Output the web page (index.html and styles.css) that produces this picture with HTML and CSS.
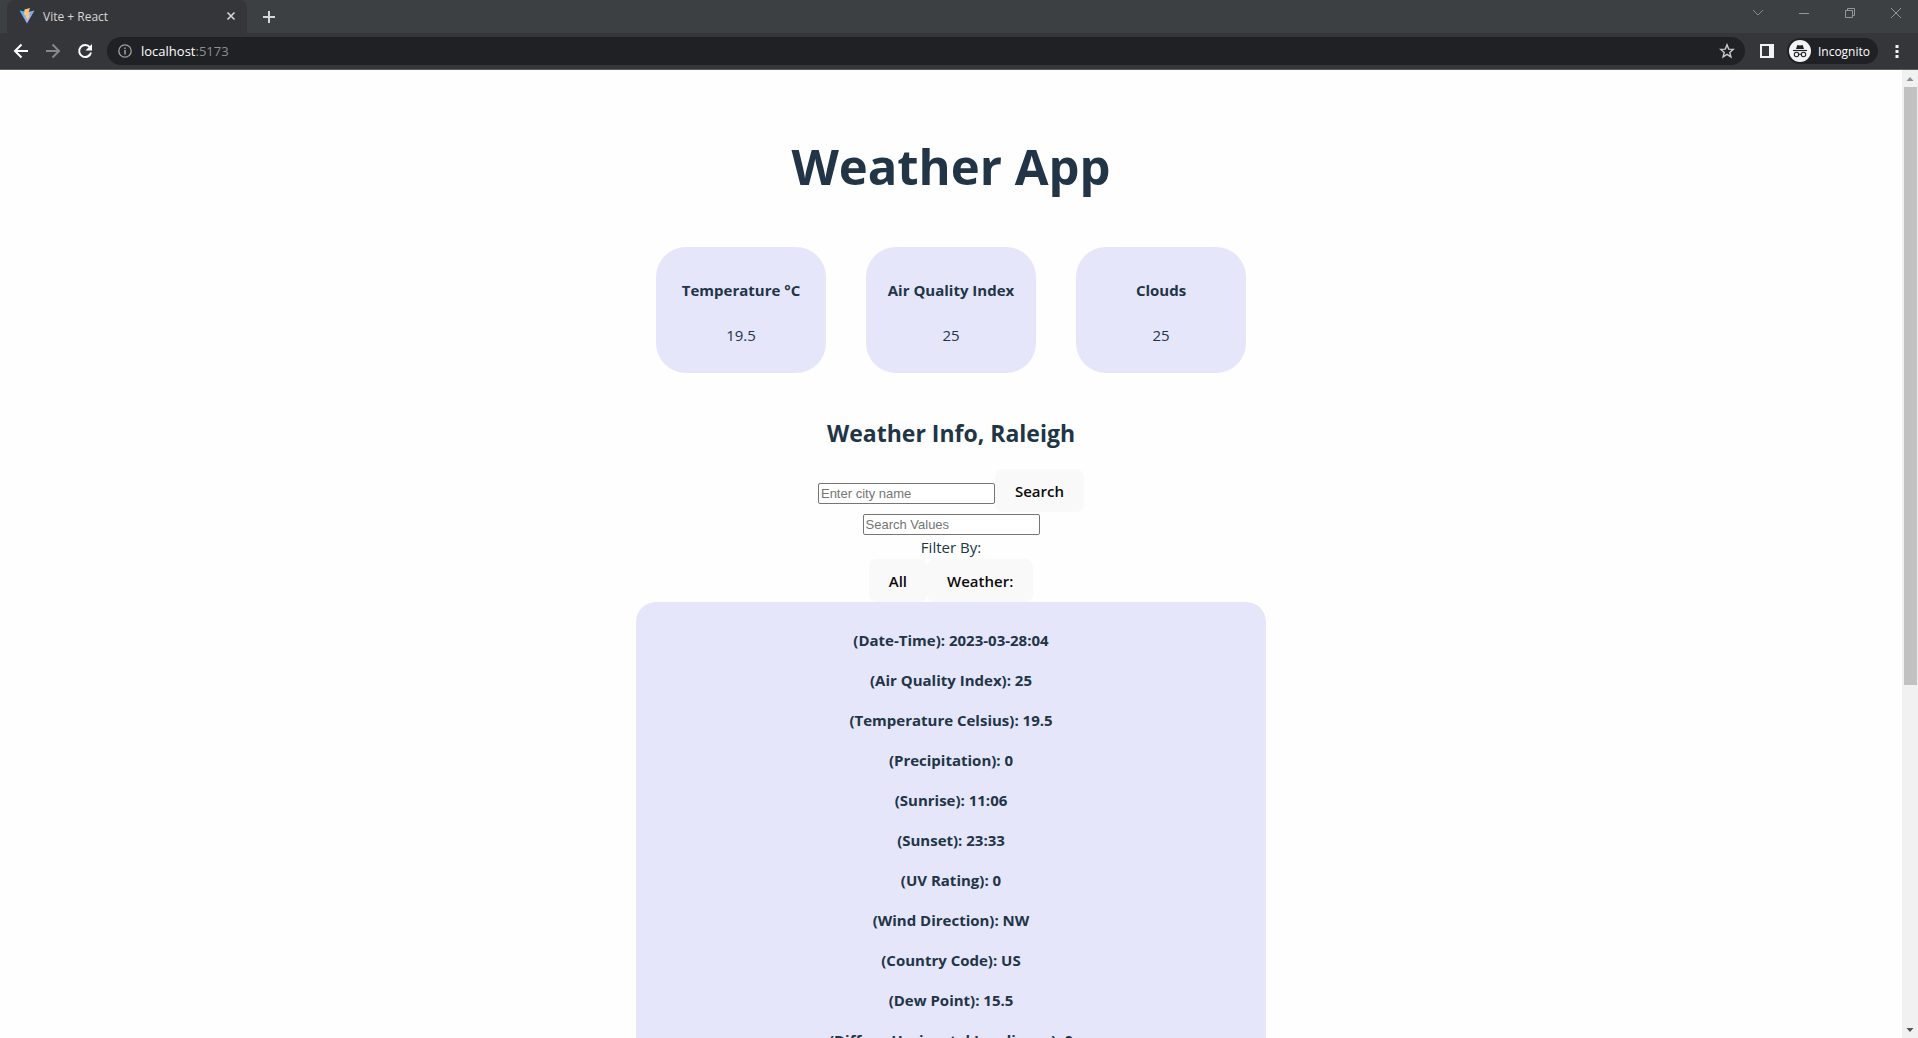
FILE: index.html
```html
<!DOCTYPE html>
<html lang="en">
<head>
<meta charset="utf-8">
<title>Vite + React</title>
<link rel="stylesheet" href="styles.css">
</head>
<body>
<header class="browser">
  <div class="tabstrip">
    <div class="tab">
      <svg class="favicon" viewBox="0 0 32 32" width="16" height="16"><defs><linearGradient id="vb" x1="0" y1="0" x2="1" y2="1"><stop offset="0" stop-color="#41b4ff"/><stop offset="1" stop-color="#b8a4f4"/></linearGradient></defs><path fill="url(#vb)" d="M1 5 16 31 31 5 17 8z"/><path fill="#ffc67a" d="M22 0 11 3 10 15l4-1-1 7 3-1-1 8 8-14-4 1 3-7-3 1z"/></svg>
      <span class="tab-title">Vite + React</span>
      <button class="icon-btn" aria-label="Close tab"><svg width="10" height="10" viewBox="0 0 10 10"><path d="M1.5 1.5l7 7m0-7l-7 7" stroke="#d5d7da" stroke-width="1.6"/></svg></button>
    </div>
    <button class="icon-btn new-tab" aria-label="New tab"><svg width="12" height="12" viewBox="0 0 12 12"><path d="M6 0v12M0 6h12" stroke="#d5d7da" stroke-width="2"/></svg></button>
    <div class="window-controls">
      <button class="icon-btn" aria-label="Search tabs"><svg width="12" height="12" viewBox="0 0 12 12"><path d="M1 3l5 5 5-5" fill="none" stroke="#85888b"/></svg></button>
      <button class="icon-btn" aria-label="Minimize"><svg width="12" height="12" viewBox="0 0 12 12"><path d="M1 6.500h10" stroke="#94979a"/></svg></button>
      <button class="icon-btn" aria-label="Restore"><svg width="12" height="12" viewBox="0 0 12 12"><path d="M1.500 3.500h7v7h-7zM3.500 3V1.500h7v7H9" fill="none" stroke="#94979a"/></svg></button>
      <button class="icon-btn" aria-label="Close"><svg width="12" height="12" viewBox="0 0 12 12"><path d="M1 1l10 10m0-10L1 11" stroke="#94979a"/></svg></button>
    </div>
  </div>
  <div class="toolbar">
    <nav class="nav">
      <button class="icon-btn" aria-label="Back"><svg width="16" height="16" viewBox="0 0 16 16"><path d="M15 8H2m6.500-6.500L2 8l6.500 6.500" fill="none" stroke="#fff" stroke-width="2"/></svg></button>
      <button class="icon-btn" aria-label="Forward"><svg width="16" height="16" viewBox="0 0 16 16"><path d="M1 8h13M7.500 1.500L14 8l-6.500 6.500" fill="none" stroke="#87888a" stroke-width="2"/></svg></button>
      <button class="icon-btn" aria-label="Reload"><svg width="16" height="16" viewBox="0 0 16 16"><path d="M13 4.500A6 6 0 1 0 14 9.500" fill="none" stroke="#fff" stroke-width="2"/><path d="M15 1v6.500H8.500z" fill="#fff"/></svg></button>
    </nav>
    <div class="omnibox">
      <svg width="14" height="14" viewBox="0 0 14 14"><circle cx="7" cy="7" r="6.200" fill="none" stroke="#9fa1a5" stroke-width="1.300"/><path d="M7 6v4.500M7 3.500V5" stroke="#9fa1a5" stroke-width="1.500"/></svg>
      <span class="url"><span class="host">localhost</span>:5173</span>
      <button class="icon-btn" aria-label="Bookmark"><svg width="16" height="16" viewBox="0 0 16 16"><path d="M8 1.800l1.700 4.300 4.600.3-3.500 3 1.100 4.500L8 11.400l-3.900 2.500 1.100-4.500-3.500-3 4.600-.3z" fill="none" stroke="#c8cacd" stroke-width="1.400"/></svg></button>
    </div>
    <button class="icon-btn" aria-label="Side panel"><svg width="14" height="14" viewBox="0 0 14 14"><path d="M0 0h14v14H0zM2 2v10h7V2z" fill="#f1f3f4" fill-rule="evenodd"/></svg></button>
    <button class="profile"><svg width="22" height="22" viewBox="0 0 22 22"><circle cx="11" cy="11" r="11" fill="#f1f3f4"/><path d="M7 9l1.300-4 2.700.6 2.700-.6L15 9z" fill="#202124"/><path d="M4 10.500h14" stroke="#202124" stroke-width="1.200"/><circle cx="7.500" cy="14.500" r="2.200" fill="none" stroke="#202124" stroke-width="1.100"/><circle cx="14.500" cy="14.500" r="2.200" fill="none" stroke="#202124" stroke-width="1.100"/><path d="M9.700 14.200h2.600" stroke="#202124"/></svg><span>Incognito</span></button>
    <button class="icon-btn menu" aria-label="Menu"><svg width="4" height="14" viewBox="0 0 4 14"><path d="M.5 1h3v3h-3zM.5 6h3v3h-3zM.5 11h3v3h-3z" fill="#f1f3f4"/></svg></button>
  </div>
</header>
<div class="viewport">
  <main class="page">
    <h1>Weather App</h1>
    <section class="stats">
      <div class="stat"><h4>Temperature °C</h4><p>19.5</p></div>
      <div class="stat"><h4>Air Quality Index</h4><p>25</p></div>
      <div class="stat"><h4>Clouds</h4><p>25</p></div>
    </section>
    <h2>Weather Info, Raleigh</h2>
    <form class="row search-row">
      <input type="text" placeholder="Enter city name" aria-label="City name"><button type="button" class="btn">Search</button>
    </form>
    <input class="values" type="text" placeholder="Search Values" aria-label="Search values">
    <p class="filter-label">Filter By:</p>
    <div class="row">
      <button type="button" class="btn">All</button><button type="button" class="btn">Weather:</button>
    </div>
    <section class="details">
      <p>(Date-Time): 2023-03-28:04</p>
      <p>(Air Quality Index): 25</p>
      <p>(Temperature Celsius): 19.5</p>
      <p>(Precipitation): 0</p>
      <p>(Sunrise): 11:06</p>
      <p>(Sunset): 23:33</p>
      <p>(UV Rating): 0</p>
      <p>(Wind Direction): NW</p>
      <p>(Country Code): US</p>
      <p>(Dew Point): 15.5</p>
      <p>(Diffuse Horizontal Irradiance): 0</p>
    </section>
  </main>
  <div class="scrollbar" aria-hidden="true">
    <svg width="16" height="16" viewBox="0 0 16 16"><path d="M4.500 11L8 7l3.500 4z" fill="#8b8f9c"/></svg>
    <div class="track"><div class="thumb"></div></div>
    <svg width="16" height="16" viewBox="0 0 16 16"><path d="M4.500 6L8 10l3.500-4z" fill="#505560"/></svg>
  </div>
</div>
</body>
</html>
```
FILE: styles.css
```css
* { box-sizing: border-box; }
body {
  margin: 0;
  height: 100vh;
  display: flex;
  flex-direction: column;
  overflow: hidden;
  font-family: "Open Sans", "Noto Sans", sans-serif;
  color: #213547;
  background: #fefefe;
}
button { font-family: inherit; border: 0; margin: 0; cursor: pointer; }
svg { display: block; flex: none; }
.icon-btn { padding: 0; background: none; }

/* Browser frame */
.browser { flex: none; border-bottom: 1px solid #5c5e62; font-size: 12px; color: #e8eaed; background: #35363a; }
.tabstrip { display: flex; align-items: center; height: 33px; padding-left: 7px; background: #3c4043; }
.tab {
  display: flex;
  align-items: center;
  align-self: stretch;
  gap: 8px;
  width: 240px;
  padding: 0 11px 1px 12px;
  border-radius: 8px 8px 0 0;
  background: #35363a;
}
.tab-title { flex: 1; color: #d5d7da; }
.new-tab { margin-left: 16px; }
.window-controls { display: flex; gap: 34px; margin-left: auto; padding: 0 16px 8px 0; }
.toolbar { display: flex; align-items: center; height: 36px; padding: 0 19px 0 13px; }
.nav { display: flex; gap: 16px; margin-right: 14px; }
.omnibox {
  flex: 1;
  display: flex;
  align-items: center;
  gap: 9px;
  height: 28px;
  margin-right: 15px;
  padding: 0 10px 0 11px;
  border-radius: 14px;
  background: #202124;
}
.url { flex: 1; font-size: 13px; color: #8c8f94; }
.host { color: #fff; }
.profile {
  display: flex;
  align-items: center;
  gap: 7px;
  height: 26px;
  margin-left: 13px;
  padding: 0 8px 0 2px;
  border-radius: 13px;
  font-size: 12px;
  color: #fff;
  background: #202124;
}
.menu { margin-left: 17px; }

/* Page */
.viewport { flex: 1; display: flex; min-height: 0; }
.page {
  flex: 1;
  display: flex;
  flex-direction: column;
  align-items: center;
  padding: 64px 32px 32px;
  overflow: hidden;
  font-size: 15px;
  line-height: 24px;
}
.page > * { flex: none; }
h1 { margin: 0 0 49px; font-size: 49px; font-weight: 700; line-height: 64px; }
.stats { display: flex; gap: 40px; }
.stat { width: 170px; padding: 31px 10px 26px; border-radius: 30px; text-align: center; background: #e6e6fa; }
.stat h4 { margin: 0 0 21px; font-weight: 700; white-space: nowrap; }
.stat p { margin: 0; }
h2 { margin: 41px 0 17px; font-size: 23px; font-weight: 700; line-height: 38px; }
.row { display: flex; align-items: center; }
input {
  width: 177px;
  height: 21px;
  padding: 1px 2px;
  border: 1px solid #767676;
  border-radius: 2px;
  font: 13px "Liberation Sans", Arial, sans-serif;
  background: #fff;
}
input::placeholder { color: #757575; }
.search-row { align-items: flex-end; }
.search-row input { margin-bottom: 8px; }
.btn {
  height: 43px;
  padding: 0 20px;
  border-radius: 8px;
  font-size: 15px;
  font-weight: 600;
  color: #0b0b0b;
  background: #f9f9f9;
}
.values { margin-top: 2px; }
.filter-label { margin: 0; }
.details { width: 630px; padding: 26px 0; border-radius: 20px; text-align: center; font-weight: 700; background: #e6e6fa; }
.details p { margin: 0 0 16px; }

/* Scrollbar */
.scrollbar { flex: none; display: flex; flex-direction: column; width: 16px; background: #f1f1f1; }
.track { flex: 1; padding: 1px 1px 0 2px; }
.thumb { height: 64%; background: #c1c1c1; }
```
